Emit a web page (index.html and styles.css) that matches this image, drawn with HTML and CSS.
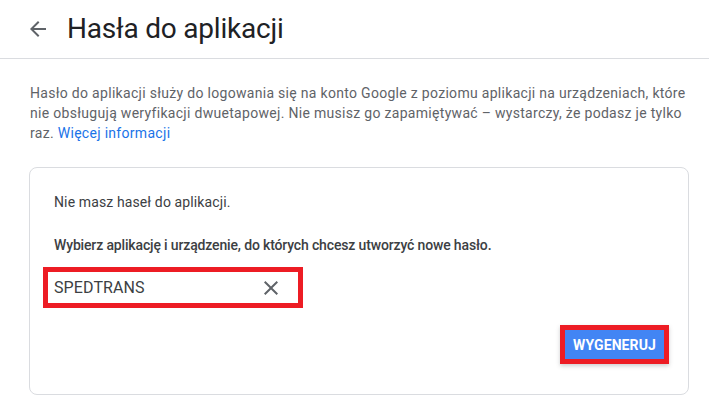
FILE: index.html
```html
<!DOCTYPE html>
<html lang="pl">
<head>
<meta charset="utf-8">
<title>Hasła do aplikacji</title>
<link rel="stylesheet" href="styles.css">
</head>
<body>
<header class="header">
  <svg class="back" width="16" height="16" viewBox="0 0 16 16" aria-hidden="true">
    <path d="M16 7H3.83l5.59-5.59L8 0 0 8l8 8 1.41-1.41L3.83 9H16z" fill="#5f6368"/>
  </svg>
  <h1 class="title">Hasła do aplikacji</h1>
</header>
<main class="content">
  <p class="intro">Hasło do aplikacji służy do logowania się na konto Google z poziomu aplikacji na urządzeniach, które nie obsługują weryfikacji dwuetapowej. Nie musisz go zapamiętywać – wystarczy, że podasz je tylko raz. <a class="link" href="#">Więcej informacji</a></p>
  <section class="card">
    <p class="empty">Nie masz haseł do aplikacji.</p>
    <p class="prompt">Wybierz aplikację i urządzenie, do których chcesz utworzyć nowe hasło.</p>
    <div class="field-mark">
      <div class="field">
        <span class="field-value">SPEDTRANS</span>
        <svg class="clear" width="14" height="14" viewBox="0 0 14 14" aria-hidden="true">
          <path d="M14 1.41L12.59 0 7 5.59 1.41 0 0 1.41 5.59 7 0 12.59 1.41 14 7 8.41 12.59 14 14 12.59 8.41 7z" fill="#5f6368"/>
        </svg>
      </div>
    </div>
    <div class="actions">
      <div class="btn-mark"><button class="btn" type="button">WYGENERUJ</button></div>
    </div>
  </section>
</main>
</body>
</html>
```
FILE: styles.css
```css
* { box-sizing: border-box; }
html, body { margin: 0; padding: 0; background: #fff; }
body {
  font-family: Roboto, "Liberation Sans", Arial, sans-serif;
  color: #3c4043;
  width: 709px;
  height: 412px;
  overflow: hidden;
}
.header {
  display: flex;
  align-items: center;
  height: 59px;
  padding: 2px 0 0 30px;
  border-bottom: 1px solid #dadce0;
}
.back { flex: none; margin-top: -3px; }
.title {
  margin: -2px 0 0 21px;
  font-size: 28px;
  line-height: 36px;
  font-weight: 400;
  color: #202124;
  letter-spacing: -0.2px;
}
.content {
  padding: 24px 20px 0 30px;
}
.intro {
  margin: 0;
  width: 662px;
  font-size: 14px;
  line-height: 20px;
  color: #5f6368;
  letter-spacing: 0.3px;
}
.link { color: #1a73e8; text-decoration: none; }
.card {
  margin-top: 24px;
  margin-left: -1px;
  width: 660px;
  height: 228px;
  border: 1px solid #dadce0;
  border-radius: 8px;
  padding: 24px 19px 0 24px;
}
.empty, .prompt {
  margin: 0;
  font-size: 14px;
  line-height: 20px;
  color: #3c4043;
}
.empty { letter-spacing: 0.12px; }
.prompt {
  margin-top: 23px;
  font-weight: 500;
  letter-spacing: -0.15px;
}
.field-mark {
  margin: 12px 0 0 -11px;
  width: 260px;
  height: 41px;
  border: 5px solid #ed1c24;
}
.field {
  display: flex;
  align-items: center;
  justify-content: space-between;
  height: 100%;
  padding: 0 20px 0 6px;
}
.field-value {
  font-size: 16px;
  color: #3c4043;
  letter-spacing: 0.1px;
}
.clear { flex: none; }
.actions {
  display: flex;
  justify-content: flex-end;
  margin-top: 17px;
}
.btn-mark {
  border: 5px solid #ed1c24;
  box-shadow: 0 2px 4px rgba(60, 64, 67, 0.25);
}
.btn {
  display: block;
  width: 99px;
  height: 29px;
  border: 0;
  margin: 0;
  padding: 0;
  background: #4285f4;
  color: #fff;
  font-family: Roboto, "Liberation Sans", Arial, sans-serif;
  font-size: 14px;
  font-weight: 700;
  letter-spacing: 0.1px;
}
```
